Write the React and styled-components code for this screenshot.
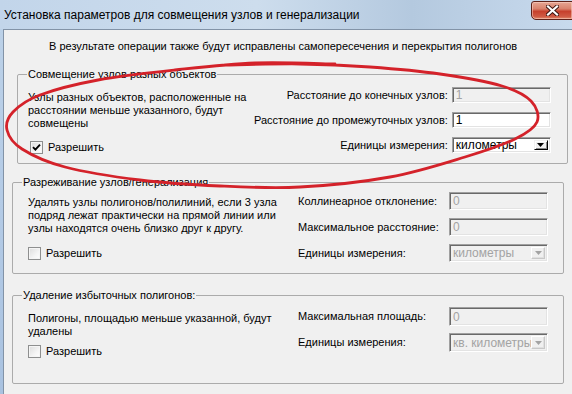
import React from "react";
import styled, { createGlobalStyle } from "styled-components";

const GlobalStyle = createGlobalStyle`
  html, body {
    margin: 0;
    padding: 0;
    background: #c4d7ea;
  }
  body {
    font-family: "Liberation Sans", Arial, sans-serif;
  }
`;

const groups = [
  {
    id: "merge",
    title: "Совмещение узлов разных объектов",
    text: ["Узлы разных объектов, расположенные на", "расстоянии меньше указанного, будут", "совмещены"],
    checked: true,
    indent: 13,
    right: 4,
    top: 15,
    leftWidth: 222,
    rowHeight: 16,
    rowGap: 9,
    padTop: 6,
    padBottom: 10,
    padLeft: 10,
    padRight: 19,
    textTop: 4,
    checkGap: 11,
    checkShift: 2,
    labelAlign: "end",
    fields: [
      { label: "Расстояние до конечных узлов:", kind: "input", value: "1", disabled: true },
      { label: "Расстояние до промежуточных узлов:", kind: "input", value: "1" },
      { label: "Единицы измерения:", kind: "select", value: "километры" },
    ],
  },
  {
    id: "thin",
    title: "Разреживание узлов/генерализация",
    text: [
      "Удалять узлы полигонов/полилиний, если 3 узла",
      "подряд лежат практически на прямой линии или",
      "узлы находятся очень близко друг к другу.",
    ],
    checked: false,
    indent: 8,
    right: 8,
    top: 12,
    leftWidth: 266,
    rowHeight: 18,
    rowGap: 8,
    padTop: 3,
    padBottom: 11,
    padLeft: 15,
    padRight: 15,
    textTop: 4,
    checkGap: 12,
    checkShift: 0,
    labelAlign: "start",
    fields: [
      { label: "Коллинеарное отклонение:", kind: "input", value: "0", disabled: true },
      { label: "Максимальное расстояние:", kind: "input", value: "0", disabled: true },
      { label: "Единицы измерения:", kind: "select", value: "километры", disabled: true },
    ],
  },
  {
    id: "remove",
    title: "Удаление избыточных полигонов:",
    text: ["Полигоны, площадью меньше указанной, будут", "удалены"],
    checked: false,
    indent: 8,
    right: 8,
    top: 15,
    leftWidth: 266,
    rowHeight: 19,
    rowGap: 7,
    padTop: 5,
    padBottom: 31,
    padLeft: 15,
    padRight: 15,
    textTop: 5,
    checkGap: 7,
    checkShift: 0,
    labelAlign: "start",
    fields: [
      { label: "Максимальная площадь:", kind: "input", value: "0", disabled: true },
      { label: "Единицы измерения:", kind: "select", value: "кв. километры", disabled: true },
    ],
  },
];

// hand-drawn marker loop, as points along the stroke
const loop = [
  [335, 64], [255, 63], [175, 70], [98, 80], [40, 95], [13, 112], [7, 130], [22, 149],
  [65, 167], [140, 180], [220, 186], [300, 187], [390, 177], [465, 157], [515, 139],
  [537, 122], [531, 101], [502, 86], [440, 74], [370, 67], [300, 64], [225, 65],
];

const splinePath = (pts) => {
  let d = `M${pts[0][0]} ${pts[0][1]}`;
  for (let i = 0; i < pts.length - 1; i++) {
    const p0 = pts[i - 1] || pts[i];
    const p1 = pts[i];
    const p2 = pts[i + 1];
    const p3 = pts[i + 2] || p2;
    const c1 = [p1[0] + (p2[0] - p0[0]) / 6, p1[1] + (p2[1] - p0[1]) / 6];
    const c2 = [p2[0] - (p3[0] - p1[0]) / 6, p2[1] - (p3[1] - p1[1]) / 6];
    d += ` C${c1[0].toFixed(1)} ${c1[1].toFixed(1)} ${c2[0].toFixed(1)} ${c2[1].toFixed(1)} ${p2[0]} ${p2[1]}`;
  }
  return d;
};

const CheckMark = () => (
  <svg width="9" height="9" viewBox="0 0 9 9">
    <path d="M1 4.2 L3.4 6.6 L8 1.6" fill="none" stroke="#000" strokeWidth="1.9" />
  </svg>
);

const Arrow = ({ disabled }) => (
  <svg width="7" height="4" viewBox="0 0 7 4">
    <path d="M0 0 H7 L3.5 4 Z" fill={disabled ? "#a3a3a3" : "#000"} />
  </svg>
);

const Field = ({ field, height }) => {
  if (field.kind === "select") {
    return (
      <Combo $h={height} $disabled={field.disabled}>
        <ComboText $disabled={field.disabled}>{field.value}</ComboText>
        <ComboButton $disabled={field.disabled}>
          <Arrow disabled={field.disabled} />
        </ComboButton>
      </Combo>
    );
  }
  return (
    <Edit $h={height} $disabled={field.disabled}>
      {field.value}
    </Edit>
  );
};

const Group = ({ g }) => (
  <GroupBox $indent={g.indent} $right={g.right} $top={g.top}>
    <Legend>{g.title}</Legend>
    <GroupBody
      $left={g.leftWidth}
      $rows={g.fields.length}
      $rowH={g.rowHeight}
      $gap={g.rowGap}
      $padTop={g.padTop}
      $padBottom={g.padBottom}
      $padLeft={g.padLeft}
      $padRight={g.padRight}
    >
      <LeftCol $textTop={g.textTop}>
        <Description>
          {g.text.map((line, i) => (
            <div key={i}>{line}</div>
          ))}
        </Description>
        <CheckRow $gap={g.checkGap} $shift={g.checkShift}>
          <CheckBox>{g.checked && <CheckMark />}</CheckBox>
          <span>Разрешить</span>
        </CheckRow>
      </LeftCol>
      {g.fields.map((f, i) => (
        <React.Fragment key={i}>
          <FieldLabel $align={g.labelAlign} style={{ gridRow: i + 1 }}>
            {f.label}
          </FieldLabel>
          <FieldCell style={{ gridRow: i + 1 }}>
            <Field field={f} height={g.rowHeight} />
          </FieldCell>
        </React.Fragment>
      ))}
    </GroupBody>
  </GroupBox>
);

const App = () => (
  <>
    <GlobalStyle />
    <Window>
      <TitleBar>
        <Title>Установка параметров для совмещения узлов и генерализации</Title>
        <CloseButton>
          <svg width="13" height="11" viewBox="0 0 13 11">
            <path d="M2 1.5 L11 9.5 M11 1.5 L2 9.5" stroke="#3b1410" strokeWidth="4" strokeLinecap="square" />
            <path d="M2 1.5 L11 9.5 M11 1.5 L2 9.5" stroke="#fff" strokeWidth="2.2" strokeLinecap="square" />
          </svg>
        </CloseButton>
      </TitleBar>
      <Client>
        <Notice>В результате операции также будут исправлены самопересечения и перекрытия полигонов</Notice>
        {groups.map((g) => (
          <Group key={g.id} g={g} />
        ))}
      </Client>
      <Scribble width="572" height="394" viewBox="0 0 572 394">
        <path
          d={splinePath(loop)}
          fill="none"
          stroke="#d4222a"
          strokeWidth="2.8"
          strokeLinecap="round"
          strokeLinejoin="round"
        />
      </Scribble>
    </Window>
  </>
);

export default App;

const Window = styled.div`
  position: relative;
  width: 572px;
  height: 394px;
  overflow: hidden;
  display: flex;
  flex-direction: column;
  background: linear-gradient(180deg, #bdd2e8 0%, #b4cbe6 50%, #a9c2e0 100%);
`;

const TitleBar = styled.div`
  height: 29px;
  flex: none;
  display: flex;
  justify-content: space-between;
  align-items: flex-start;
  background: linear-gradient(90deg, #c2d5ea 0%, #cddded 45%, #b4c9df 72%, #c8daed 100%);
`;

const Title = styled.div`
  padding: 8px 0 0 4px;
  font-family: "Liberation Sans", Arial, sans-serif;
  font-size: 12px;
  line-height: 15px;
  color: #000;
  white-space: nowrap;
`;

const CloseButton = styled.div`
  width: 42px;
  height: 19px;
  margin-top: 1px;
  margin-right: -1px;
  display: flex;
  align-items: center;
  justify-content: center;
  box-sizing: border-box;
  border: 1px solid #5e2119;
  border-radius: 3px 0 0 5px;
  background: linear-gradient(180deg, #e6a693 0%, #d9826d 40%, #c6402c 55%, #cf5a44 85%, #e08a6a 100%);
  box-shadow: inset 0 0 0 1px rgba(255, 220, 210, 0.5);
`;

const Client = styled.div`
  flex: 1;
  margin-left: 3px;
  display: flex;
  flex-direction: column;
  background: #f0f0f0;
  border-top: 1px solid #8293a7;
  border-left: 1px solid #8293a7;
  font-family: "Liberation Sans", Arial, sans-serif;
  font-size: 11px;
  color: #000;
`;

const Notice = styled.div`
  margin-top: 10px;
  padding-left: 45px;
  line-height: 13px;
  white-space: nowrap;
`;

const GroupBox = styled.fieldset`
  margin: ${(p) => p.$top}px ${(p) => p.$right}px 0 ${(p) => p.$indent}px;
  padding: 0;
  min-width: 0;
  border: 1px solid #ababab;
  border-radius: 2px;
`;

const Legend = styled.legend`
  margin-left: 9px;
  padding: 0 1px;
  line-height: 13px;
  white-space: nowrap;
`;

const GroupBody = styled.div`
  display: grid;
  grid-template-columns: ${(p) => p.$left}px 1fr 99px;
  grid-template-rows: repeat(${(p) => p.$rows}, ${(p) => p.$rowH}px);
  column-gap: 4px;
  row-gap: ${(p) => p.$gap}px;
  padding: ${(p) => p.$padTop}px ${(p) => p.$padRight}px ${(p) => p.$padBottom}px ${(p) => p.$padLeft}px;
`;

const LeftCol = styled.div`
  grid-column: 1;
  grid-row: 1 / -1;
  display: flex;
  flex-direction: column;
  align-items: flex-start;
  padding-top: ${(p) => p.$textTop}px;
`;

const Description = styled.div`
  line-height: 13px;
  white-space: nowrap;
`;

const CheckRow = styled.div`
  margin-top: ${(p) => p.$gap}px;
  margin-left: ${(p) => p.$shift}px;
  display: flex;
  align-items: center;
  gap: 5px;
  line-height: 13px;
`;

const CheckBox = styled.div`
  width: 13px;
  height: 13px;
  box-sizing: border-box;
  border: 1px solid #8e8f8f;
  background: linear-gradient(135deg, #dcdcdc 0%, #f4f4f4 60%, #ffffff 100%);
  box-shadow: inset 0 0 0 1px #f5f5f5;
  display: flex;
  align-items: center;
  justify-content: center;
`;

const FieldLabel = styled.div`
  grid-column: 2;
  align-self: center;
  justify-self: ${(p) => p.$align};
  white-space: nowrap;
  line-height: 13px;
`;

const FieldCell = styled.div`
  grid-column: 3;
  display: flex;
`;

const sunken = `
  box-sizing: border-box;
  border: 1px solid;
  border-color: #a0a0a0 #ffffff #ffffff #a0a0a0;
  box-shadow: inset 1px 1px 0 #696969, inset -1px -1px 0 #e3e3e3;
`;

const Edit = styled.div`
  ${sunken}
  width: 100%;
  height: ${(p) => p.$h}px;
  padding: 0 3px;
  display: flex;
  align-items: center;
  background: ${(p) => (p.$disabled ? "#f0f0f0" : "#ffffff")};
  color: ${(p) => (p.$disabled ? "#a3a3a3" : "#000")};
  font-size: 12px;
`;

const Combo = styled.div`
  ${sunken}
  width: 100%;
  height: ${(p) => p.$h}px;
  padding: 2px 2px 2px 3px;
  display: flex;
  align-items: stretch;
  background: ${(p) => (p.$disabled ? "#f0f0f0" : "#ffffff")};
`;

const ComboText = styled.div`
  flex: 1;
  min-width: 0;
  overflow: visible;
  clip-path: inset(-4px 0 -4px 0);
  white-space: nowrap;
  display: flex;
  align-items: center;
  font-size: 12px;
  line-height: 12px;
  color: ${(p) => (p.$disabled ? "#a3a3a3" : "#000")};
`;

const ComboButton = styled.div`
  width: 14px;
  flex: none;
  box-sizing: border-box;
  display: flex;
  align-items: center;
  justify-content: center;
  background: #f0f0f0;
  border: 1px solid;
  border-color: ${(p) =>
    p.$disabled ? "#ffffff #c8c8c8 #c8c8c8 #ffffff" : "#f0f0f0 #000000 #000000 #f0f0f0"};
  box-shadow: ${(p) =>
    p.$disabled ? "inset -1px -1px 0 #e0e0e0" : "inset 1px 1px 0 #ffffff, inset -1px -1px 0 #8a8a8a"};
`;

const Scribble = styled.svg`
  position: absolute;
  left: 0;
  top: 0;
  pointer-events: none;
`;
